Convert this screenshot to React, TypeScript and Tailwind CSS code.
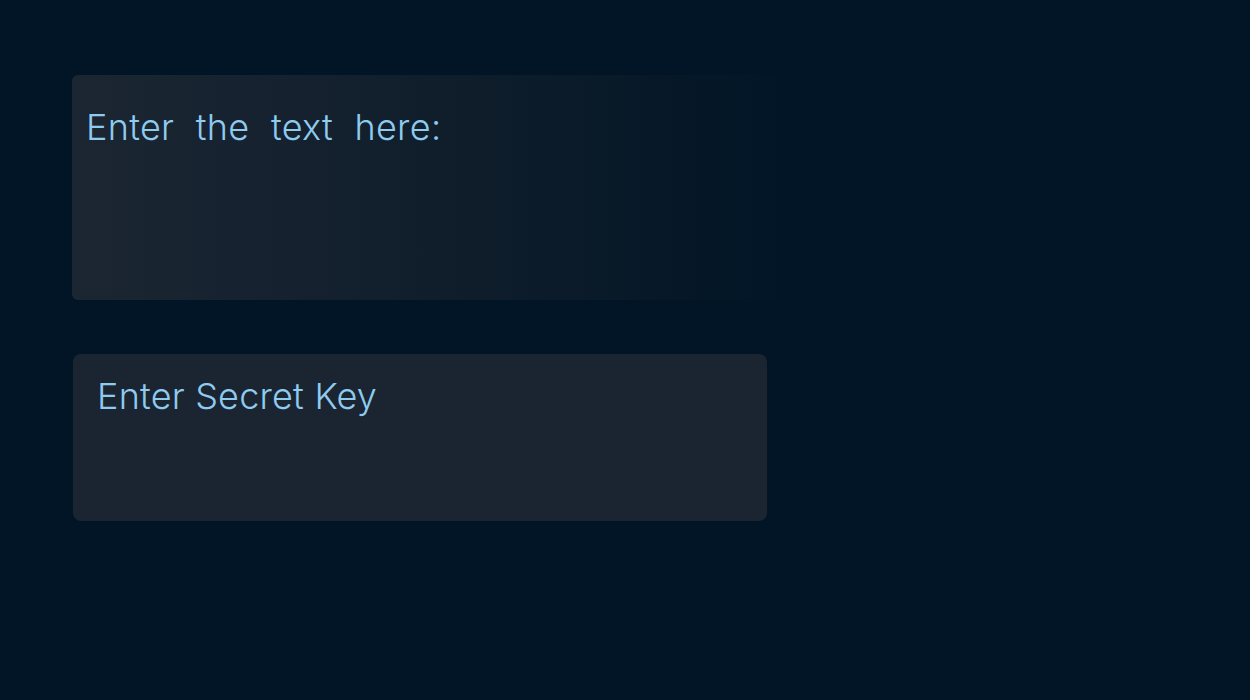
export default function App() {
  return (
    <div className="min-h-[700px] w-full bg-[#021526] pt-[75px] pl-[72px] font-['Inter',sans-serif]">
      <div className="flex flex-col gap-[54px]">
        <div className="h-[225px] w-[725px] rounded-l-md bg-gradient-to-r from-[#1c2633] via-[#0f1d2b] via-55% to-[#021526] pl-[14px] pt-[30px]">
          <p className="text-[36px] font-light leading-[44px] tracking-[0.3px] [word-spacing:11px] text-[#8ecbef]">
            Enter the text here:
          </p>
        </div>
        <div className="ml-px h-[167px] w-[694px] rounded-lg bg-[#1b2532] px-[24px] pt-[20px]">
          <p className="text-[36px] font-light leading-[44px] tracking-[0.2px] text-[#8ecbef]">
            Enter Secret Key
          </p>
        </div>
      </div>
    </div>
  );
}
